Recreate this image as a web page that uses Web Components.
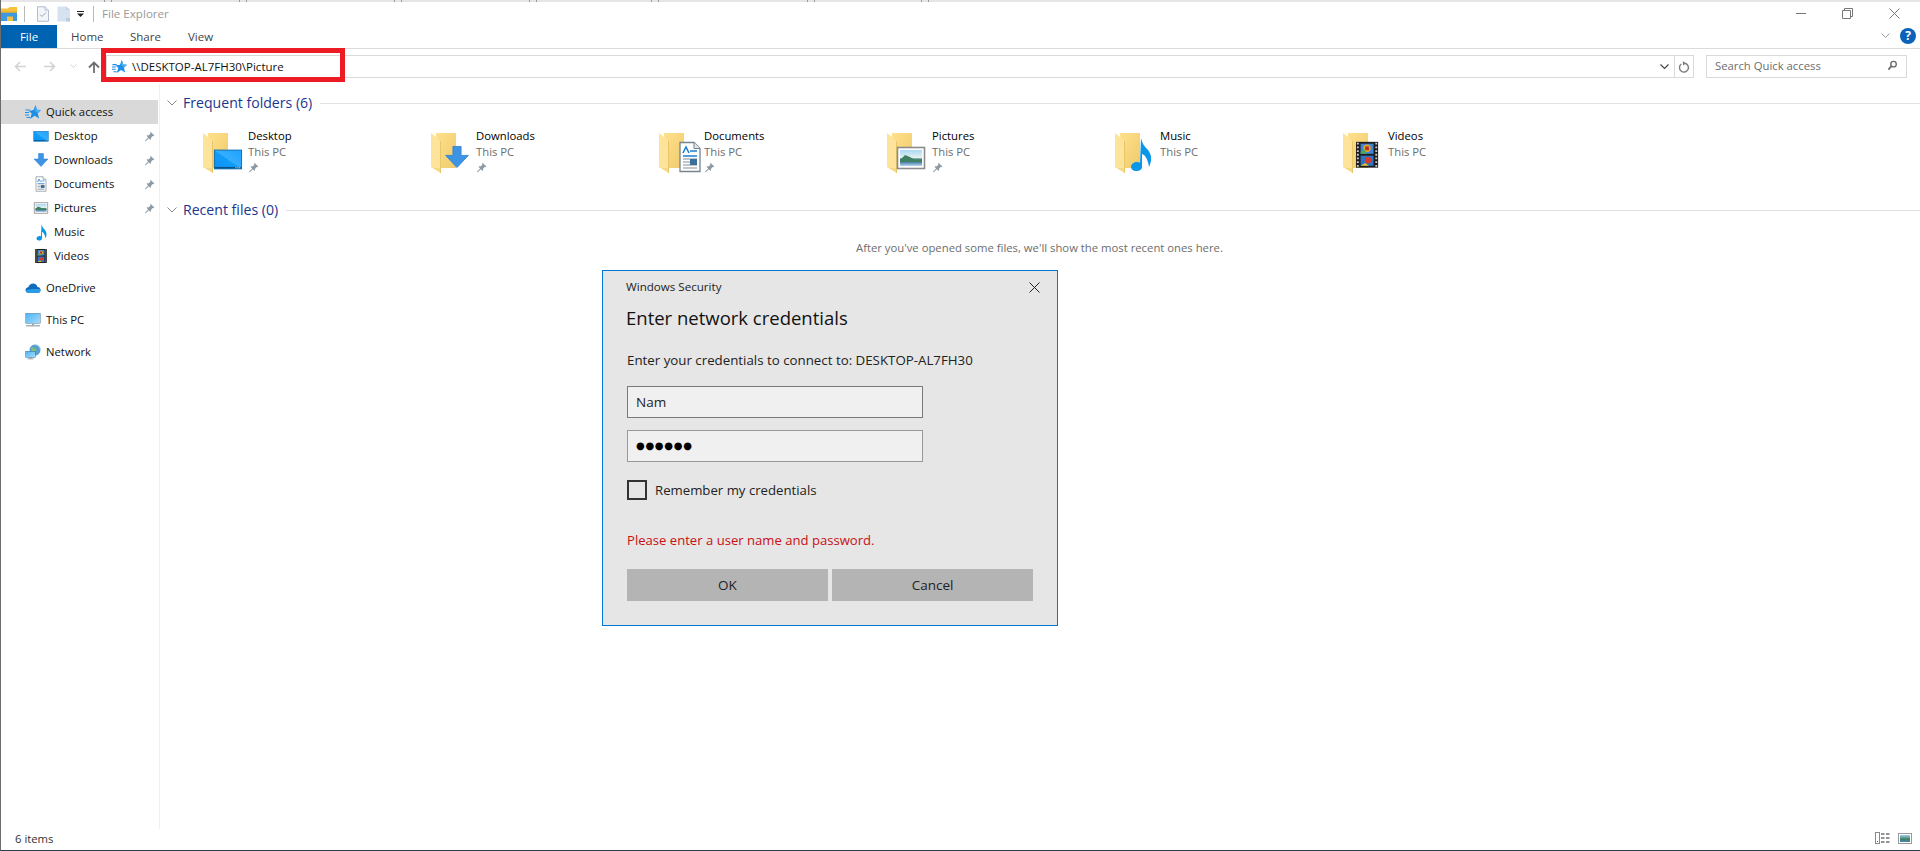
<!DOCTYPE html>
<html lang="en">
<head>
<meta charset="utf-8">
<title>File Explorer</title>
<style>
html,body{margin:0;padding:0;background:#fff;overflow:hidden}
body{font:11.3px "Open Sans","Noto Sans",sans-serif;color:#000}
</style>
</head>
<body>
<win-app>
  <title-strip slot="top"></title-strip>
  <title-bar slot="top">File Explorer</title-bar>
  <ribbon-tabs slot="top"></ribbon-tabs>
  <address-row slot="top" path="\\DESKTOP-AL7FH30\Picture" search="Search Quick access"></address-row>

  <nav-pane slot="nav">
    <nav-item kind="head" icon="star" selected>Quick access</nav-item>
    <nav-item icon="desktop" pin>Desktop</nav-item>
    <nav-item icon="download" pin>Downloads</nav-item>
    <nav-item icon="doc" pin>Documents</nav-item>
    <nav-item icon="picture" pin>Pictures</nav-item>
    <nav-item icon="music">Music</nav-item>
    <nav-item icon="video">Videos</nav-item>
    <nav-item kind="head" icon="onedrive" class="gap">OneDrive</nav-item>
    <nav-item kind="head" icon="pc" class="gap">This PC</nav-item>
    <nav-item kind="head" icon="network" class="gap">Network</nav-item>
  </nav-pane>

  <content-pane slot="main">
    <section-head>Frequent folders (6)</section-head>
    <tile-row>
      <folder-tile overlay="desktop" name="Desktop" pin></folder-tile>
      <folder-tile overlay="download" name="Downloads" pin></folder-tile>
      <folder-tile overlay="doc" name="Documents" pin></folder-tile>
      <folder-tile overlay="picture" name="Pictures" pin></folder-tile>
      <folder-tile overlay="music" name="Music"></folder-tile>
      <folder-tile overlay="video" name="Videos"></folder-tile>
    </tile-row>
    <section-head class="recent">Recent files (0)</section-head>
    <empty-note>After you've opened some files, we'll show the most recent ones here.</empty-note>
  </content-pane>

  <status-bar slot="status">6 items</status-bar>

  <red-mark slot="over"></red-mark>
  <cred-dialog slot="over"></cred-dialog>
</win-app>

<script>
const UI = '"Open Sans","Noto Sans",sans-serif';
const DEFS = `<defs>
<linearGradient id="gd" x1="0" y1="1" x2="1" y2="0"><stop offset="0" stop-color="#0a90f5"/><stop offset=".5" stop-color="#119df9"/><stop offset=".5" stop-color="#35aeff"/><stop offset="1" stop-color="#1ea2ff"/></linearGradient>
<linearGradient id="gf" x1="0" y1="0" x2="1" y2="1"><stop offset="0" stop-color="#ffe08c"/><stop offset="1" stop-color="#eecb6c"/></linearGradient>
<linearGradient id="gs" x1="0" y1="0" x2="0" y2="1"><stop offset="0" stop-color="#a9d8f5"/><stop offset=".5" stop-color="#e8f2ef"/><stop offset=".55" stop-color="#4e8a6c"/><stop offset=".72" stop-color="#3c6f9e"/><stop offset="1" stop-color="#b8d8ec"/></linearGradient>
<linearGradient id="gp" x1="0" y1="0" x2="1" y2="1"><stop offset="0" stop-color="#4db4f4"/><stop offset="1" stop-color="#a6dcfb"/></linearGradient>
</defs>`;
const ART = {
  star:`<path d="M21 2l3 9.500 8 .5-6.500 6.500 2.500 10.500-8.500-5.500L10 30l3.500-11-6-5 9.500-2z" fill="#1c8fe6"/><path d="M1 12h9M0 17h8M0 22h8M3 27h7" stroke="#1c8fe6" stroke-width="2.200"/><path d="M21 2l3 9.500 8 .5-7 6-5-5z" fill="#46b0f2"/>`,
  desktop:`<rect x="1.500" y="6.500" width="29" height="20" fill="url(#gd)" stroke="#0b6bb0"/><rect x="2" y="24.500" width="28" height="1.600" fill="#0a4f86"/><path d="M24 25.300h1M26 25.300h1M28 25.300h1" stroke="#fff"/>`,
  download:`<path d="M11 3h10v11h9L16 29 2 14h9z" fill="#3d93e4" stroke="#2d7fd0"/>`,
  doc:`<path d="M6 1.500h14l6 6v23H6z" fill="#fff" stroke="#76838f" stroke-width="1.300"/><path d="M20 1.500v6h6" fill="#dfe6ec" stroke="#76838f"/><path d="M9 12l3-6 3 6" fill="none" stroke="#1c7fd6" stroke-width="1.600"/><path d="M16 10h7M9 15h14" stroke="#1c7fd6" stroke-width="1.300"/><path d="M9 18h14M9 21h14M9 24h14M9 27h14" stroke="#838d96" stroke-width="1.200"/><rect x="16" y="18" width="7" height="6" fill="#3c719b"/>`,
  picture:`<rect x="2.500" y="5.500" width="27" height="21" fill="#fff" stroke="#8c8c8c" stroke-width="1.600"/><rect x="5" y="8" width="22" height="16" fill="url(#gs)"/><path d="M5 18l5-5 5 2 5 3 7 0v2H5z" fill="#3f7f62"/>`,
  music:`<path d="M14 0c1 5 3 8 7 12 4 5 4 11 1 17-.5-3-1-7-4-11-1-1-2-2-3-2v13c0 3-3 4-6 4s-5-2-5-4c0-3 3-5 6-5 1.200 0 2 .2 3 .7z" fill="#0a97e8" transform="translate(3 0)"/>`,
  video:`<rect x="4" y="2" width="24" height="28" fill="#1d1d1d"/><path d="M5 4h2M5 8h2M5 12h2M5 16h2M5 20h2M5 24h2M5 28h2M25 4h2M25 8h2M25 12h2M25 16h2M25 20h2M25 24h2M25 28h2" stroke="#cfcfcf" stroke-width="2"/><rect x="9" y="4" width="14" height="11" fill="#3f86d8"/><rect x="9" y="17" width="14" height="11" fill="#2e73c6"/><circle cx="16" cy="9" r="4" fill="#e8a51e"/><path d="M14 7h4v4h-4z" fill="#b42c2c"/><path d="M9 13l4-3 3 5H9z" fill="#4fa85a"/><circle cx="17" cy="22" r="3.500" fill="#d9392c"/><path d="M9 28l5-3 4 3z" fill="#e8c21e"/>`,
  onedrive:`<path d="M8 26c-4 0-7-2.500-7-6 0-3 2.500-5 5.500-5.500C8 10 12 7 16 7c4.500 0 8 3 9 7 3.500 0 6 2.500 6 6 0 3.500-2.500 6-6 6z" fill="#0f6cbd"/><path d="M1.200 20.500C2 24 4.500 26 8 26h17c3.500 0 6-2.500 6-6 0-.6-.1-1.200-.3-1.800L14 18z" fill="#2a9ce6"/>`,
  pc:`<rect x="1.500" y="2.500" width="29" height="20" fill="url(#gp)" stroke="#5a7f96"/><rect x="14" y="23" width="4" height="3" fill="#9aa7b0"/><rect x="2" y="26" width="28" height="3" fill="#a9b4bb"/>`,
  network:`<circle cx="20" cy="12" r="11" fill="#5a9fd0"/><path d="M12 5c4 0 4 4 8 4s3 5 0 6-3 6-6 4" fill="#7cc07a"/><path d="M20 1c6 0 11 5 11 11" fill="none" stroke="#bcdcf0" stroke-width="2"/><rect x="1.500" y="14.500" width="19" height="12" fill="url(#gp)" stroke="#2f6d99"/><rect x="9" y="27" width="4" height="2" fill="#7b8b96"/><rect x="5" y="29" width="12" height="1.500" fill="#7b8b96"/>`,
  pin:`<path d="M19 2l11 11-2 2-2-1-6 6c1 3 0 5-1 6l-5-5-8 8-3 1 1-3 8-8-5-5c1-1 3-2 6-1l6-6-1-2z" fill="#8e9aa3"/>`,
  appfolder:`<path d="M-4 5h14l3-3h15v28H-4z" fill="#f4c13d"/><path d="M-4 13h32v17H20v-9H8v9H-4z" fill="#3d9ae0"/><rect x="-4" y="11" width="32" height="2" fill="#e8a91f"/>`,
  checkdoc:`<path d="M5 1.500h15l7 7v22H5z" fill="#f2f5fa" stroke="#93a3bb" stroke-width="1.400"/><path d="M20 1.500v7h7" fill="#dde4ee" stroke="#93a3bb"/><path d="M10 17l4 4 8-8" fill="none" stroke="#93aac6" stroke-width="2"/>`,
  blankdoc:`<path d="M3 1h17l8 7v23H3z" fill="#d7e2f0"/><path d="M20 1v7h8" fill="#c3d2e6"/><rect x="20" y="24" width="8" height="7" fill="#bcccdf"/>`,
  search:`<circle cx="19" cy="12" r="8" fill="none" stroke="#6b6b6b" stroke-width="4"/><path d="M13 18L4 28" stroke="#6b6b6b" stroke-width="5"/>`,
  refresh:`<path d="M8 10a11 11 0 1 0 9-2" fill="none" stroke="#7b7b7b" stroke-width="3.400"/><path d="M12 2l7 6-7 6z" fill="#7b7b7b" transform="rotate(-4 15 8)"/>`
};
const FOLDER = `<path d="M5 2h20v35H5z" fill="url(#gf)"/><path d="M0 2l10 8v32l-10-6z" fill="#fde49a"/><path d="M0 36l10 6 0-5H5z" fill="#f5d987"/><rect x="9" y="10" width="1" height="32" fill="#e8c66a"/>`;
const OVER = {
  desktop:[10,13,30], download:[13,13,26], doc:[15,10,32], picture:[8,11,32], music:[9,7,32], video:[9.300,9,29.500]
};
const art = (n,vb='0 0 32 32') => `<svg xmlns="http://www.w3.org/2000/svg" width="100%" height="100%" viewBox="${vb}" style="display:block;overflow:visible">${DEFS}${ART[n]}</svg>`;

function el(tag, html, setup){
  customElements.define(tag, class extends HTMLElement{
    constructor(){ super(); this.attachShadow({mode:'open'}); }
    connectedCallback(){
      const h = typeof html==='function' ? html(this) : html;
      this.shadowRoot.innerHTML = h;
      if(setup) setup(this);
    }
  });
}

el('x-icon', h=>`<style>:host{display:block;flex:none;width:${h.getAttribute('w')}px;height:${h.getAttribute('h')||h.getAttribute('w')}px}</style>${art(h.getAttribute('name'))}`);

el('win-app', `<style>
:host{display:flex;flex-direction:column;position:relative;box-sizing:border-box;width:1920px;height:851px;overflow:hidden;background:#fff;border-left:1px solid #6b6b6b;border-bottom:1px solid #2f3f4f;font-family:${UI};font-size:11.3px}
.body{flex:1;display:flex;min-height:0}
</style><slot name="top"></slot><div class="body"><slot name="nav"></slot><slot name="main"></slot></div><slot name="status"></slot><slot name="over"></slot>`);

el('title-strip', `<style>:host{display:block;height:2px;background:#e6e6e6}
.t{display:flex;height:2px;padding-left:103px}
i{display:block;width:1px;height:2px;background:#9a9a9a;margin-right:6px}
.s{width:121px;height:2px}</style>
<div class="t"><i></i><i></i><span class="s"></span><i></i><i></i><span class="s" style="width:141px"></span><i></i><i></i><span class="s"></span><i></i><i></i><span class="s" style="width:108px"></span><i></i><i></i><span class="s" style="width:142px"></span><i></i><i></i><span class="s" style="width:100px"></span><i></i><i></i></div>`);

el('title-bar', `<style>
:host{display:flex;align-items:center;height:23px;color:#999;font-size:11.6px;position:relative}
.sep{width:1px;height:16px;background:#b8b8b8}
.slot{margin-left:8px;line-height:16px}
.ctl{margin-left:auto;display:flex;align-items:center;padding-right:20px}
svg{display:block}
</style>
<x-icon name="appfolder" w="16" style="margin-left:2px"></x-icon>
<span class="sep" style="margin-left:5px"></span>
<x-icon name="checkdoc" w="16" style="margin-left:10px"></x-icon>
<x-icon name="blankdoc" w="16" style="margin-left:5px"></x-icon>
<svg width="8" height="6" style="margin-left:5px"><rect x="0" y="0" width="7" height="1" fill="#222"/><path d="M0 2.500h7L3.500 6z" fill="#222"/></svg>
<span class="sep" style="margin-left:8px"></span>
<span class="slot"><slot></slot></span>
<div class="ctl">
<svg width="11" height="11" style="margin-right:35px"><path d="M0 5.500h10" stroke="#777"/></svg>
<svg width="11" height="11" style="margin-right:36px"><path d="M2.500 2.500V.5h8v8h-2M.5 2.500h8v8h-8z" fill="none" stroke="#777"/></svg>
<svg width="11" height="11"><path d="M.5.500l10 10M10.500.500l-10 10" stroke="#777"/></svg>
</div>`);

el('ribbon-tabs', `<style>
:host{display:flex;height:23px;border-bottom:1px solid #dadbdc;color:#444;font-size:11.5px;line-height:23px;position:relative}
.f{width:56px;background:#0063b1;color:#fff;text-align:center;height:23px}
.a{position:absolute;top:0}
.h{position:absolute;right:4px;top:3px;display:flex;align-items:center;gap:10px}
.q{width:16px;height:16px;border-radius:50%;background:#0a63b8;color:#fff;font:bold 12px/16px ${UI};text-align:center}
</style><div class="f">File</div><span class="a" style="left:70px">Home</span><span class="a" style="left:129px">Share</span><span class="a" style="left:187px">View</span>
<div class="h"><svg width="9" height="6"><path d="M.5.500l4 4 4-4" fill="none" stroke="#9a9a9a"/></svg><div class="q">?</div></div>`);

el('address-row', h=>`<style>
:host{display:flex;align-items:center;height:35px;padding-right:13px;box-sizing:border-box;font-size:11.5px}
svg{display:block;flex:none}
.bar{flex:1;height:23px;margin-left:6px;box-sizing:border-box;border:1px solid #d9d9d9;display:flex;align-items:center;padding-left:5px;color:#111}
.path{margin-left:5px;line-height:16px}
.end{margin-left:auto;display:flex;align-items:center;height:100%}
.dv{width:1px;height:100%;background:#d9d9d9;margin:0 3px 0 5px}
.search{width:201px;height:23px;margin-left:12px;box-sizing:border-box;border:1px solid #d9d9d9;display:flex;align-items:center;padding:0 8px 2px 8px;color:#6d6d6d;justify-content:space-between;font-size:11.3px}
</style>
<svg width="12" height="11" style="margin-left:13px"><path d="M12 5.500H1.500M6 1L1.500 5.500 6 10" fill="none" stroke="#d2d2d2" stroke-width="1.500"/></svg>
<svg width="12" height="11" style="margin-left:18px"><path d="M0 5.500h10.500M6 1l4.500 4.500L6 10" fill="none" stroke="#d2d2d2" stroke-width="1.500"/></svg>
<svg width="7" height="5" style="margin-left:14px"><path d="M.5.500l3 3 3-3" fill="none" stroke="#d2d2d2"/></svg>
<svg width="12" height="12" style="margin-left:11px"><path d="M6 12V1.500M1 6.500l5-5 5 5" fill="none" stroke="#6e6e6e" stroke-width="1.800"/></svg>
<div class="bar"><x-icon name="star" w="15"></x-icon><span class="path">${h.getAttribute('path')}</span>
<div class="end"><svg width="9" height="6"><path d="M.5.500l4 4 4-4" fill="none" stroke="#444" stroke-width="1.200"/></svg><span class="dv"></span><x-icon name="refresh" w="13" style="margin-right:2px"></x-icon></div></div>
<div class="search"><span>${h.getAttribute('search')}</span><x-icon name="search" w="11"></x-icon></div>`);

el('nav-pane', `<style>:host{display:block;width:158px;flex:none;box-sizing:content-box;border-right:1px solid #efefef;padding-top:16px}</style><slot></slot>`);

el('nav-item', h=>{
  const head = h.getAttribute('kind')==='head';
  const sel = h.hasAttribute('selected');
  return `<style>
:host{display:flex;align-items:center;height:24px;box-sizing:border-box;padding-left:${head?24:32}px;color:#111;font-size:11.3px;position:relative;background:${sel?'#d9d9d9':'transparent'};margin-right:1px}
:host(.gap){margin-top:8px}
.t{margin-left:5px;line-height:16px}
.p{position:absolute;left:143px;top:7px}
</style><x-icon name="${h.getAttribute('icon')}" w="16"></x-icon><span class="t"><slot></slot></span>${h.hasAttribute('pin')?'<x-icon class="p" name="pin" w="11"></x-icon>':''}`;
});

el('content-pane', `<style>:host{display:block;flex:1;padding-top:8px;min-width:0}</style><slot></slot>`);

el('section-head', `<style>
:host{display:flex;align-items:center;height:22px;padding-left:7px;color:#1b3590;font-size:14.1px}
svg{flex:none;margin-right:6px}
.t{white-space:nowrap;line-height:22px}
.l{flex:1;height:1px;background:#e2e2e2;margin-left:8px;margin-top:1px}
</style><svg width="10" height="6"><path d="M.5.500l4.500 4.500L9.500.5" fill="none" stroke="#8a8a8a"/></svg><span class="t"><slot></slot></span><span class="l"></span>`);

el('tile-row', `<style>:host{display:flex;padding:13px 0 0 43px;height:72px;box-sizing:content-box}</style><slot></slot>`);

el('folder-tile', h=>{
  const o = OVER[h.getAttribute('overlay')];
  return `<style>
:host{display:flex;width:228px;flex:none}
.ic{width:45px;height:44px;margin-top:4px;flex:none}
.tx{font-size:11.3px;line-height:16px;color:#000;padding-top:1px}
.sub{color:#6d6d6d}
x-icon{margin-top:2px}
svg{display:block;overflow:visible}
</style><div class="ic"><svg width="48" height="44" viewBox="0 0 48 44">${DEFS}${FOLDER}<svg x="${o[0]}" y="${o[1]}" width="${o[2]}" height="${o[2]}" viewBox="0 0 32 32">${ART[h.getAttribute('overlay')]}</svg></svg></div>
<div class="tx"><div>${h.getAttribute('name')}</div><div class="sub">This PC</div>${h.hasAttribute('pin')?'<x-icon name="pin" w="11"></x-icon>':''}</div>`;
});

el('empty-note', `<style>:host{display:block;margin-top:18px;padding-left:696px;color:#6d6d6d;font-size:11.3px;line-height:18px;white-space:nowrap}</style><slot></slot>`);

el('status-bar', `<style>
:host{display:flex;align-items:center;height:20px;padding:0 8px 2px 14px;color:#333;font-size:11.3px;box-sizing:border-box;justify-content:space-between;margin-bottom:1px}
.r{display:flex;align-items:center;gap:8px}
svg{display:block}
</style><span><slot></slot></span><div class="r">
<svg width="15" height="12"><rect x=".5" y=".5" width="4" height="11" fill="none" stroke="#8a8a8a"/><path d="M6 2h3.500M11 2h3.500M6 6h3.500M11 6h3.500M6 10h3.500M11 10h3.500" stroke="#707070" stroke-width="1.300"/><rect x="2" y="9" width="1" height="1" fill="#c33"/></svg>
<svg width="14" height="11"><rect x=".5" y=".5" width="13" height="10" fill="#fff" stroke="#999"/><rect x="2" y="2" width="10" height="7" fill="url(#s)"/><defs><linearGradient id="s" x1="0" y1="0" x2="0" y2="1"><stop offset="0" stop-color="#9fd0ee"/><stop offset=".6" stop-color="#3f7f62"/><stop offset="1" stop-color="#4a86b8"/></linearGradient></defs></svg>
</div>`);

el('red-mark', `<style>:host{position:absolute;left:100px;top:48px;width:244px;height:34px;box-sizing:border-box;border:5.500px solid #ed1c24;pointer-events:none}</style>`);

el('cred-dialog', `<style>
:host{position:absolute;left:601px;top:270px;width:456px;height:356px;box-sizing:border-box;border:1px solid #0078d7;background:#e6e6e6;padding:8px 24px 0;display:flex;flex-direction:column;color:#1a1a1a;font-family:${UI}}
.tt{display:flex;justify-content:space-between;align-items:center;height:16px;font-size:11.6px;line-height:16px;color:#222;margin-left:-1px}
.tt svg{margin-right:-7px}
h2{margin:9px 0 0 -1px;font-weight:400;font-size:18.500px;line-height:28px;height:28px;color:#111}
p{margin:18px 0 0;font-size:13.300px;line-height:20px;height:20px;color:#222}
.in{height:32px;box-sizing:border-box;width:296px;border:1px solid #7a7a7a;background:#f0f0f0;padding:0 8px;line-height:30px;font-size:13.500px;color:#222}
.u{margin-top:16px}.pw{margin-top:12px;border-color:#999;font-family:"DejaVu Sans",sans-serif;font-size:10px;letter-spacing:.7px;color:#000}
.ck{display:flex;align-items:center;margin-top:18px;height:20px;font-size:13.200px;color:#222}
.ck i{display:block;width:20px;height:20px;box-sizing:border-box;border:2px solid #333;margin-right:8px}
.er{margin-top:30px;font-size:13.100px;line-height:20px;height:20px;color:#c80f14}
.bt{display:grid;grid-template-columns:1fr 1fr;gap:4px;margin-top:19px}
.bt div{height:32px;background:#b4b4b4;text-align:center;line-height:32px;font-size:13.500px;color:#222}
</style>
<div class="tt"><span>Windows Security</span><svg width="11" height="11"><path d="M.5.500l10 10M10.500.500l-10 10" stroke="#222"/></svg></div>
<h2>Enter network credentials</h2>
<p>Enter your credentials to connect to: DESKTOP-AL7FH30</p>
<div class="in u">Nam</div>
<div class="in pw">●●●●●●</div>
<div class="ck"><i></i><span>Remember my credentials</span></div>
<div class="er">Please enter a user name and password.</div>
<div class="bt"><div>OK</div><div>Cancel</div></div>`);
</script>
</body>
</html>
